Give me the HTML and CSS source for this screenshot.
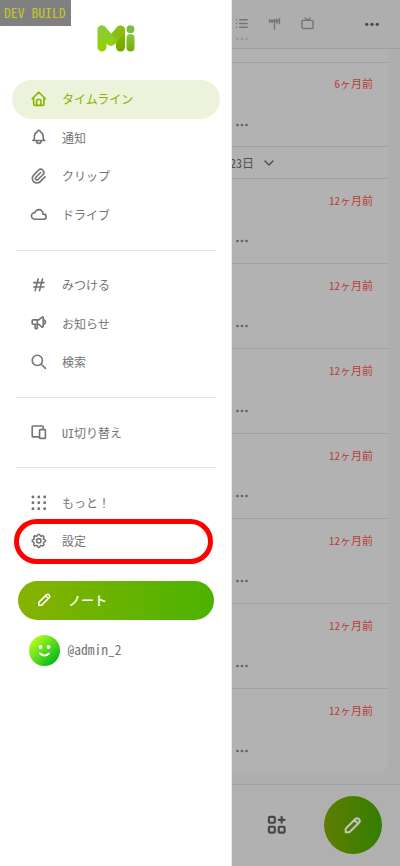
FILE: index.html
```html
<!DOCTYPE html>
<html lang="ja">
<head>
<meta charset="utf-8">
<title>Misskey</title>
<link rel="stylesheet" href="styles.css">
</head>
<body>
<svg width="0" height="0" class="defs">
  <defs>
    <symbol id="pencil" viewBox="0 0 24 24"><path d="M4 20h4L18.500 9.500a2.830 2.830 0 0 0-4-4L4 16v4M13.500 6.500l4 4"/></symbol>
    <symbol id="dots" viewBox="0 0 12 4"><circle cx="1.500" cy="2" r="1.350"/><circle cx="6" cy="2" r="1.350"/><circle cx="10.500" cy="2" r="1.350"/></symbol>
  </defs>
</svg>
<div class="app">
  <main class="page">
    <header class="tabs">
      <div class="tab list"><svg class="ic" viewBox="0 0 24 24"><path d="M9 6h12M9 12h12M9 18h12M4 6v.01M4 12v.01M4 18v.01"/></svg><svg class="more faint"><use href="#dots"/></svg></div>
      <div class="tab antenna"><svg class="ic" viewBox="0 0 24 24"><path d="M20 4v8M16 4.500v7M12 5v16M8 5.500v5M4 6v4M20 8H4"/></svg></div>
      <div class="tab channel"><svg class="ic" viewBox="0 0 24 24"><path d="M5 7h14a2 2 0 0 1 2 2v9a2 2 0 0 1-2 2H5a2 2 0 0 1-2-2V9a2 2 0 0 1 2-2zM16 3l-4 4-4-4"/></svg></div>
      <div class="tab menu"><svg class="more big"><use href="#dots"/></svg></div>
    </header>
    <section class="feed">
      <div class="stub"></div>
      <article class="note first"><time>6ヶ月前</time><svg class="more"><use href="#dots"/></svg></article>
      <div class="date"><span>23日</span><svg viewBox="0 0 12 8"><path d="M2 2l4 4 4-4"/></svg></div>
      <article class="note"><time>12ヶ月前</time><svg class="more"><use href="#dots"/></svg></article>
      <article class="note"><time>12ヶ月前</time><svg class="more"><use href="#dots"/></svg></article>
      <article class="note"><time>12ヶ月前</time><svg class="more"><use href="#dots"/></svg></article>
      <article class="note"><time>12ヶ月前</time><svg class="more"><use href="#dots"/></svg></article>
      <article class="note"><time>12ヶ月前</time><svg class="more"><use href="#dots"/></svg></article>
      <article class="note"><time>12ヶ月前</time><svg class="more"><use href="#dots"/></svg></article>
      <article class="note"><time>12ヶ月前</time><svg class="more"><use href="#dots"/></svg></article>
    </section>
    <footer class="bottom">
      <div class="round"><svg class="widgets" viewBox="0 0 24 24"><path d="M5 4h4a1 1 0 0 1 1 1v4a1 1 0 0 1-1 1H5a1 1 0 0 1-1-1V5a1 1 0 0 1 1-1zM5 14h4a1 1 0 0 1 1 1v4a1 1 0 0 1-1 1H5a1 1 0 0 1-1-1v-4a1 1 0 0 1 1-1zM15 14h4a1 1 0 0 1 1 1v4a1 1 0 0 1-1 1h-4a1 1 0 0 1-1-1v-4a1 1 0 0 1 1-1zM14 7h6M17 4v6"/></svg></div>
      <div class="round write"><svg class="pen"><use href="#pencil"/></svg></div>
    </footer>
  </main>

  <aside class="drawer">
    <div class="brand">
      <svg viewBox="0 0 37 27">
        <defs>
          <linearGradient id="m1" x1="0" y1="0" x2="0" y2="1"><stop offset="0" stop-color="#86cc3c"/><stop offset="1" stop-color="#96d000"/></linearGradient>
          <linearGradient id="m2" x1="0" y1="0" x2="0" y2="1"><stop offset="0" stop-color="#8fc400"/><stop offset="1" stop-color="#76a400"/></linearGradient>
          <linearGradient id="m3" x1="0" y1="0" x2="0" y2="1"><stop offset="0" stop-color="#86c840"/><stop offset="1" stop-color="#7cab00"/></linearGradient>
        </defs>
        <rect x="18.500" y="0.500" width="9" height="26" rx="4.500" fill="url(#m2)"/>
        <path d="M8 4L13.500 9L19.500 2.200Q23 -1 26.500 2.500Q28.500 5 26.500 8L17.500 19Q13.500 22.500 9.500 19L4 12Z" fill="#8abf12"/>
        <path d="M0 5A4.500 4.500 0 0 1 8 2L20 16L17.500 19Q13.500 22.500 9.500 19L9 18.500V22A4.500 4.500 0 0 1 0 22Z" fill="url(#m1)"/>
        <circle cx="33" cy="4.200" r="3.900" fill="#7bbd40"/>
        <rect x="29" y="9" width="8" height="17.500" rx="4" fill="url(#m3)"/>
      </svg>
    </div>
    <nav class="nav">
      <a class="item active"><svg class="ic" viewBox="0 0 24 24"><path d="M5 12H3l9-9 9 9h-2M5 12v7a2 2 0 0 0 2 2h10a2 2 0 0 0 2-2v-7M9 21v-6a2 2 0 0 1 2-2h2a2 2 0 0 1 2 2v6"/></svg>タイムライン</a>
      <a class="item"><svg class="ic" viewBox="0 0 24 24"><path d="M10 5a2 2 0 0 1 4 0 7 7 0 0 1 4 6v3a4 4 0 0 0 2 3H4a4 4 0 0 0 2-3v-3a7 7 0 0 1 4-6M9 17v1a3 3 0 0 0 6 0v-1"/></svg>通知</a>
      <a class="item"><svg class="ic" viewBox="0 0 24 24"><path d="M15 7l-6.500 6.500a1.500 1.500 0 0 0 3 3L18 10a3 3 0 0 0-6-6l-6.500 6.500a4.500 4.500 0 0 0 9 9L21 13" transform="translate(-.5 .5)"/></svg>クリップ</a>
      <a class="item"><svg class="ic" viewBox="0 0 24 24"><path d="M6.657 18C4.085 18 2 15.993 2 13.517c0-2.475 2.085-4.482 4.657-4.482.393-1.762 1.794-3.200 3.675-3.773 1.880-.572 3.956-.193 5.444 1 1.488 1.190 2.162 3.007 1.770 4.769h.990c1.913 0 3.464 1.560 3.464 3.486S20.450 18 18.536 18z"/></svg>ドライブ</a>
      <hr>
      <a class="item"><svg class="ic" viewBox="0 0 24 24"><path d="M5 9h14M5 15h14M11 4L7 20M17 4l-4 16"/></svg>みつける</a>
      <a class="item"><svg class="ic" viewBox="0 0 24 24"><path d="M18 8a3 3 0 0 1 0 6M10 8v11a1 1 0 0 1-1 1H8a1 1 0 0 1-1-1v-5M12 8l4.524-3.770A.9.9 0 0 1 18 4.922v12.156a.9.9 0 0 1-1.476.692L12 14H4a1 1 0 0 1-1-1V9a1 1 0 0 1 1-1z"/></svg>お知らせ</a>
      <a class="item"><svg class="ic" viewBox="0 0 24 24"><path d="M3 10a7 7 0 1 0 14 0 7 7 0 1 0-14 0M21 21l-6-6"/></svg>検索</a>
      <hr>
      <a class="item"><svg class="ic" viewBox="0 0 24 24"><path d="M14 9h6a1 1 0 0 1 1 1v10a1 1 0 0 1-1 1h-6a1 1 0 0 1-1-1V10a1 1 0 0 1 1-1zM18 9V5a1 1 0 0 0-1-1H4a1 1 0 0 0-1 1v13a1 1 0 0 0 1 1h9M16 9h2"/></svg>UI切り替え</a>
      <hr>
      <a class="item full"><svg class="ic" viewBox="0 0 24 24"><path class="grid" d="M4 4v.01M12 4v.01M20 4v.01M4 12v.01M12 12v.01M20 12v.01M4 20v.01M12 20v.01M20 20v.01"/></svg>もっと！</a>
      <a class="item"><svg class="ic" viewBox="0 0 24 24"><path d="M10.325 4.317c.426-1.756 2.924-1.756 3.350 0a1.724 1.724 0 0 0 2.573 1.066c1.543-.94 3.310.826 2.370 2.370a1.724 1.724 0 0 0 1.065 2.572c1.756.426 1.756 2.924 0 3.350a1.724 1.724 0 0 0-1.066 2.573c.94 1.543-.826 3.310-2.370 2.370a1.724 1.724 0 0 0-2.572 1.065c-.426 1.756-2.924 1.756-3.350 0a1.724 1.724 0 0 0-2.573-1.066c-1.543.94-3.310-.826-2.370-2.370a1.724 1.724 0 0 0-1.065-2.572c-1.756-.426-1.756-2.924 0-3.350a1.724 1.724 0 0 0 1.066-2.573c-.94-1.543.826-3.310 2.370-2.370 1 .608 2.296.07 2.572-1.065zM9 12a3 3 0 1 0 6 0 3 3 0 0 0-6 0"/></svg>設定</a>
    </nav>
    <button class="post"><svg class="pen"><use href="#pencil"/></svg>ノート</button>
    <div class="account">
      <svg viewBox="0 0 31 31"><defs><linearGradient id="av" x1="0" y1="0" x2="1" y2="1"><stop offset=".12" stop-color="#b5ff1c"/><stop offset=".9" stop-color="#00b41e"/></linearGradient></defs><circle cx="15.500" cy="15.500" r="15.500" fill="url(#av)"/><circle cx="11.500" cy="12" r="1.900" fill="#fff"/><circle cx="19.500" cy="12" r="1.900" fill="#fff"/><path d="M11 18.500q4.500 4 9 0" fill="none" stroke="#fff" stroke-width="1.800" stroke-linecap="round"/></svg>
      <span>@admin_2</span>
    </div>
    <div class="ring"></div>
  </aside>
  <div class="dev">DEV BUILD</div>
</div>
</body>
</html>
```
FILE: styles.css
```css
* { box-sizing: border-box; }
body {
  margin: 0;
  font-family: "Noto Sans CJK JP", sans-serif;
  font-feature-settings: "hwid";
  color: #747474;
}
.defs { position: absolute; }
.app { position: relative; width: 400px; height: 866px; overflow: hidden; background: #aeaeae; }
.ic, .pen, .widgets {
  fill: none;
  stroke: currentColor;
  stroke-width: 2.200;
  stroke-linecap: round;
  stroke-linejoin: round;
}

/* dimmed page behind the drawer */
.page { display: flex; flex-direction: column; height: 866px; padding-left: 232px; }
.tabs {
  display: grid;
  grid-template-columns: 19px 47px 19px 1fr;
  height: 49px;
  border-bottom: 1px solid #a0a0a0;
  color: #747474;
}
.tab { display: flex; flex-direction: column; align-items: center; padding-top: 16px; }
.tab .ic { width: 15px; height: 15px; }
.tab.menu { align-items: flex-end; padding: 22px 21px 0 0; }
.more { width: 12px; height: 4px; fill: #626262; }
.more.faint { margin-top: 6px; fill: #969696; }
.more.big { width: 14px; height: 4.700px; fill: #474747; }
.feed { width: 156px; height: 724px; background: #b2b2b2; border-radius: 0 0 9px 0; }
.stub { height: 14px; border-bottom: 1px solid #a1a1a1; }
.note {
  display: flex;
  flex-direction: column;
  height: 85px;
  padding: 13px 15px 0 4px;
  border-bottom: 1px solid #a1a1a1;
}
.note.first { height: 84px; padding-top: 12px; }
.note:last-child { border-bottom: 0; }
.note time { align-self: flex-end; font-size: 11px; line-height: 16px; color: #b93d38; }
.note .more { margin-top: 31px; }
.note.first .more { margin-top: 32px; }
.date {
  display: flex;
  align-items: center;
  gap: 9px;
  height: 32px;
  border-bottom: 1px solid #a1a1a1;
  font-size: 12px;
  color: #505050;
}
.date span { margin-left: -2px; padding-bottom: 1px; }
.date svg { width: 12px; height: 8px; fill: none; stroke: #505050; stroke-width: 1.500; stroke-linecap: round; stroke-linejoin: round; }
.bottom {
  display: flex;
  gap: 18px;
  height: 82.500px;
  margin-top: auto;
  padding: 11.500px 0 0 16px;
  border-top: 1px solid #a0a0a0;
  background: #b0b0b0;
}
.round { display: grid; place-items: center; width: 58px; height: 58px; border-radius: 50%; background: #b1b1b1; color: #474747; }
.widgets { width: 23.500px; height: 23.500px; }
.write { background: linear-gradient(90deg, #5e7e00, #347e00); color: #c4c4c4; }
.write .pen { width: 22px; height: 22px; }

/* drawer */
.drawer {
  position: absolute;
  inset: 0 auto 0 0;
  width: 232px;
  background: #fff;
  border-right: 1px solid #e9e9e9;
}
.brand { height: 80px; padding: 24.500px 0 0 97px; }
.brand svg { display: block; width: 38px; height: 27px; }
.nav { padding: 0 11px 0 12px; }
.item {
  display: flex;
  align-items: center;
  gap: 14.700px;
  height: 38.700px;
  padding: 0 0 2px 17.700px;
  border-radius: 20px;
  font-size: 12px;
}
.item .ic { width: 17.600px; height: 17.600px; }
.item.full { font-feature-settings: normal; }
.item.active { background: #edf3da; color: #86b300; }
.item .grid { stroke-width: 4; }
.nav hr { height: 1px; margin: 14.800px 4px 15.700px 4px; border: 0; background: #e6e6e6; }
.post {
  display: flex;
  align-items: center;
  gap: 15.500px;
  width: 195.500px;
  height: 38.500px;
  margin: 20px 0 0 18px;
  padding: 0 0 2px 17.500px;
  border: 0;
  border-radius: 20px;
  background: linear-gradient(90deg, #86b300, #4ab300);
  color: #fff;
  font: 500 13px "Noto Sans CJK JP", sans-serif;
}
.post .pen { width: 17px; height: 17px; }
.account { display: flex; align-items: center; gap: 7.500px; height: 31px; margin: 15px 0 0 29px; font-size: 13.500px; }
.account svg { width: 31px; height: 31px; }
.account span { padding-bottom: 2px; }
.ring { position: absolute; left: 13.500px; top: 519px; width: 199.500px; height: 45px; border: 5px solid #f00; border-radius: 23px; }
.dev {
  position: absolute;
  left: 0;
  top: 0;
  width: 71px;
  height: 26px;
  padding-left: 4px;
  background: #808080;
  color: #c6c52c;
  font-size: 13.700px;
  line-height: 25px;
  white-space: nowrap;
}
```
